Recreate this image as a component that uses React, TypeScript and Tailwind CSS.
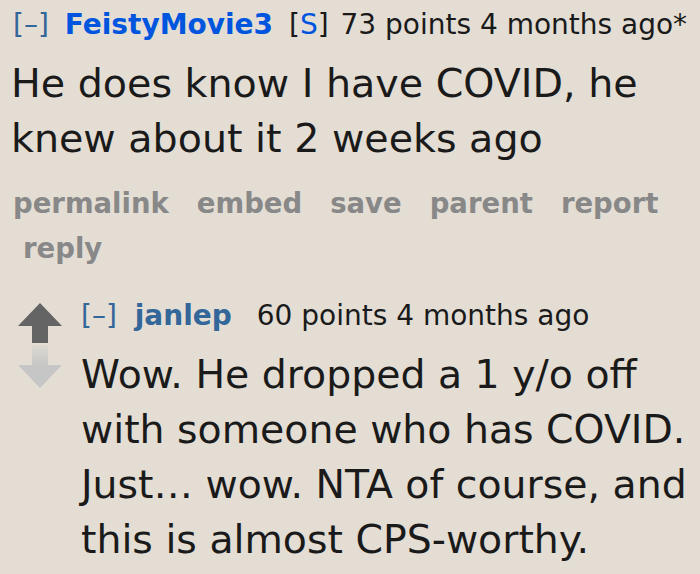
import React from "react";

const font = { fontFamily: '"DejaVu Sans", Verdana, sans-serif' };

const UpArrow = () => (
  <svg width="44" height="40" viewBox="0 0 44 40">
    <polygon points="22,0 44,23 30,23 30,40 14,40 14,23 0,23" fill="#646464" />
  </svg>
);

const DownArrow = () => (
  <svg width="44" height="44" viewBox="0 0 44 44">
    <defs>
      <linearGradient id="fade" x1="0" y1="0" x2="0" y2="1">
        <stop offset="0" stopColor="#c6c6c6" stopOpacity="0.2" />
        <stop offset="0.5" stopColor="#c6c6c6" stopOpacity="1" />
      </linearGradient>
    </defs>
    <polygon points="14,0 30,0 30,20 44,20 22,43 0,20 14,20" fill="url(#fade)" />
  </svg>
);

const Buttons = () => (
  <div className="mt-[15px] flex flex-wrap gap-x-[28px] text-[27.5px] font-bold leading-[45px] text-[#888]">
    <span>permalink</span>
    <span>embed</span>
    <span>save</span>
    <span>parent</span>
    <span>report</span>
    <span className="ml-[10px]">reply</span>
  </div>
);

export default function App() {
  return (
    <div className="h-[574px] w-[700px] overflow-hidden bg-[#e3ddd4] pl-[13px] pt-[7px]" style={font}>
      <div className="text-[28px] leading-[36px] text-[#1a1a1a] whitespace-nowrap">
        <span className="text-[#336699]">[–]</span>{" "}
        <span className="ml-[7px] font-bold text-[#0055df]">FeistyMovie3</span>{" "}
        <span className="ml-[7px]">
          [<span className="text-[#0055df]">S</span>]
        </span>{" "}
        <span className="ml-[3px]">73 points 4 months ago*</span>
      </div>
      <p className="-ml-[2px] mt-[13px] text-[39.6px] leading-[55px] text-[#1a1a1a]">
        He does know I have COVID, he knew about it 2 weeks ago
      </p>
      <Buttons />

      <div className="mt-[27px] flex">
        <div className="ml-[5px] flex w-[63px] flex-col pt-[5px]">
          <UpArrow />
          <div className="mt-[2px]">
            <DownArrow />
          </div>
        </div>
        <div className="flex-1">
          <div className="text-[28px] leading-[36px] text-[#1a1a1a] whitespace-nowrap">
            <span className="text-[#336699]">[–]</span>{" "}
            <span className="ml-[9px] font-bold text-[#336699]">janlep</span>{" "}
            <span className="ml-[16px]">60 points 4 months ago</span>
          </div>
          <p className="mt-[13px] text-[39.4px] leading-[55px] text-[#1a1a1a]">
            Wow. He dropped a 1 y/o off with someone who has COVID. Just… wow. NTA of course, and this is almost CPS-worthy.
          </p>
        </div>
      </div>
    </div>
  );
}
